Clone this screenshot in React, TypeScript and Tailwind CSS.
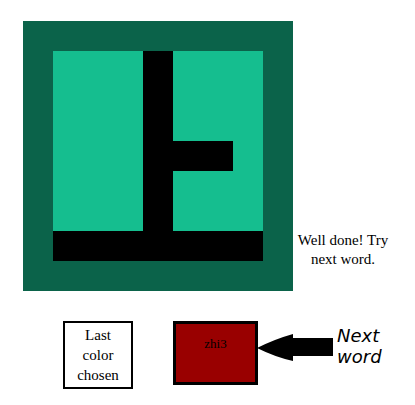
const glyph = [
  "0001000",
  "0001000",
  "0001000",
  "0001110",
  "0001000",
  "0001000",
  "1111111",
];

export default function App() {
  return (
    <div className="min-h-screen bg-white font-['Liberation_Serif',serif] text-black">
      <div className="flex items-end pl-[23px] pt-[21px]">
        {/* character board */}
        <div className="bg-[#0b634a] p-[30px]">
          <div className="grid grid-cols-7 bg-[#15be8f]">
            {glyph.map((row, r) =>
              row.split("").map((c, i) => (
                <div key={`${r}-${i}`} className={`h-[30px] w-[30px] ${c === "1" ? "bg-black" : ""}`} />
              ))
            )}
          </div>
        </div>
        <p className="mb-[22px] w-[100px] text-center text-[15px] leading-[19px]">
          Well done! Try next word.
        </p>
      </div>

      <div className="flex items-start pl-[63px] pt-[30px]">
        <div className="flex h-[68px] w-[70px] flex-col items-center justify-center border-2 border-black bg-white text-center text-[15px] leading-[20px]">
          <span>Last</span>
          <span>color</span>
          <span>chosen</span>
        </div>

        <div className="ml-[40px] h-[64px] w-[85px] border-[3px] border-black bg-[#990000] pt-[12px] text-center text-[13px] leading-[15px]">
          zhi3
        </div>

        <svg className="ml-[-1px] mt-[13px]" width="77" height="28" viewBox="0 0 77 28">
          <path d="M0 14 Q18 5 36 0 L36 4 L76 4 L76 22 L36 22 L36 27 Q18 23 0 14 Z" fill="#000" />
        </svg>

        <div className="ml-[3px] mt-[4px] font-['DejaVu_Sans',sans-serif] text-[18px] italic leading-[21px]">
          <div>Next</div>
          <div>word</div>
        </div>
      </div>
    </div>
  );
}
